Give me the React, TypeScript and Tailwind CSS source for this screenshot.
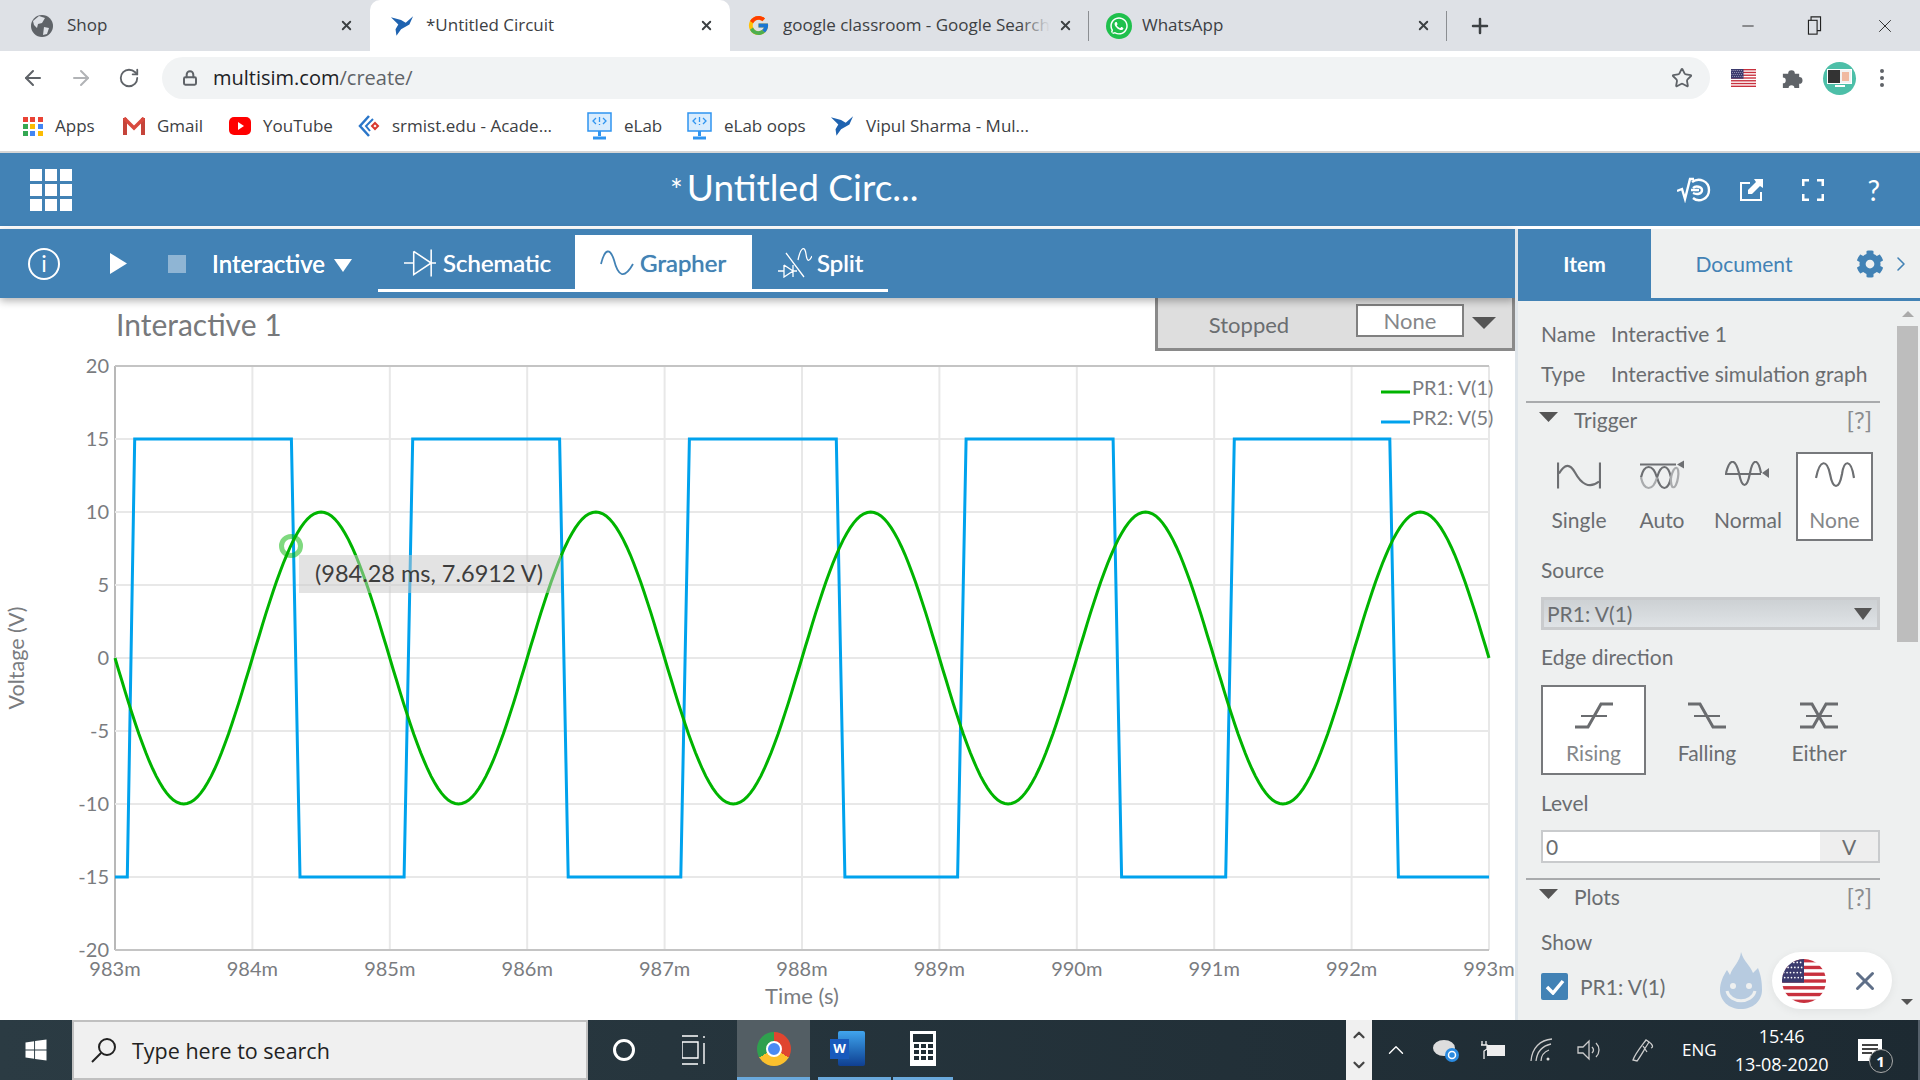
import { ArrowLeft, ArrowRight, ChevronDown, ChevronRight, ChevronUp, Lock, Minus, Plus, RotateCw, Star, X } from "lucide-react";
import { FaCog, FaWhatsapp, FaWindows } from "react-icons/fa";
import { FcGoogle } from "react-icons/fc";

const chromeFont = "font-['Open_Sans',sans-serif]";
const appFont = "font-['Lato',sans-serif]";

function Bird({ className = "w-[24px] h-[22px]" }: { className?: string }) {
  return (
    <svg viewBox="0 0 26 23" className={className}>
      <path d="M1 2 L12 5 L17 8 L25 1 L21 10 L12 15 L7 22 L6 15 L9 10 Z" fill="#1f63b0" />
    </svg>
  );
}

function Flag({ className }: { className: string }) {
  const stripes = [0, 1, 2, 3, 4, 5, 6];
  const stars = [1, 3, 5, 7, 9, 11];
  return (
    <svg viewBox="0 0 26 26" className={className} preserveAspectRatio="none">
      <rect width="26" height="26" fill="#fff" />
      {stripes.map((s) => (
        <rect key={s} y={s * 4} width="26" height="2" fill="#c8313e" />
      ))}
      <rect width="13" height="14" fill="#3c3b6e" />
      {stars.map((x) =>
        [2, 5, 8, 11].map((y) => <circle key={`${x}-${y}`} cx={x + (y % 2 ? 0.6 : 0)} cy={y} r="0.5" fill="#fff" />),
      )}
    </svg>
  );
}

function Tab({ width, icon, label, active, sep, fade, inset = "pl-[17px]" }: { width: string; icon: React.ReactNode; label: string; active?: boolean; sep?: boolean; fade?: boolean; inset?: string }) {
  return (
    <div className={`${width} ${inset} relative flex h-[51px] items-center pr-[16px] ${active ? "rounded-t-[10px] bg-white" : ""}`}>
      <div className="flex w-[36px] shrink-0 items-center">{icon}</div>
      <span className="relative mb-[2px] min-w-0 flex-1 overflow-hidden whitespace-nowrap text-[17px] text-[#3c4043]">
        {label}
        {fade && <span className="absolute right-0 top-0 h-full w-[30px] bg-gradient-to-r from-transparent to-[#dee1e6]" />}
      </span>
      <X size={15} strokeWidth={3} className="ml-2 shrink-0 text-[#3c4043]" />
      {sep && <div className="absolute right-0 top-[11px] h-[30px] w-px bg-[#8b8e92]" />}
    </div>
  );
}

const bookmarks = [
  { id: "apps", label: "Apps", width: "w-[100px]" },
  { id: "gmail", label: "Gmail", width: "w-[106px]" },
  { id: "yt", label: "YouTube", width: "w-[129px]" },
  { id: "srm", label: "srmist.edu - Acade...", width: "w-[229px]" },
  { id: "elab", label: "eLab", width: "w-[100px]" },
  { id: "elab", label: "eLab oops", width: "w-[143px]" },
  { id: "bird", label: "Vipul Sharma - Mul...", width: "w-[210px]" },
];

function BookmarkIcon({ id }: { id: string }) {
  if (id === "apps") {
    const colors = ["#ea4335", "#ea4335", "#ea4335", "#34a853", "#fbbc04", "#4285f4", "#34a853", "#4285f4", "#fbbc04"];
    return (
      <div className="grid w-[20px] grid-cols-3 gap-[2px]">
        {colors.map((c, i) => (
          <div key={i} className="h-[5px] w-[5px]" style={{ background: c }} />
        ))}
      </div>
    );
  }
  if (id === "gmail") {
    return (
      <svg viewBox="0 0 22 18" className="h-[18px] w-[22px]">
        <path d="M0 1 H4 V18 H0 Z M18 1 H22 V18 H18 Z" fill="#c5443a" />
        <path d="M1 1 L11 11 L21 1" fill="none" stroke="#d8493e" strokeWidth="3.5" />
      </svg>
    );
  }
  if (id === "yt") {
    return (
      <svg viewBox="0 0 22 20" className="h-[20px] w-[22px]">
        <rect y="1" width="22" height="18" rx="5" fill="#f00" />
        <path d="M9 6 L15 10 L9 14 Z" fill="#fff" />
      </svg>
    );
  }
  if (id === "srm") {
    return (
      <svg viewBox="0 0 22 24" className="h-[24px] w-[22px]" fill="none">
        <path d="M11 2 L2 12 L11 22" stroke="#2a76c9" strokeWidth="2.5" />
        <path d="M15 5 L8 12 L12 17" stroke="#2a76c9" strokeWidth="2" />
        <path d="M17 9 L20 12 L17 15 L14 12 Z" stroke="#d8392f" strokeWidth="2" />
      </svg>
    );
  }
  if (id === "elab") {
    return (
      <svg viewBox="0 0 25 28" className="h-[28px] w-[25px]" fill="none" stroke="#2f94f0">
        <rect x="1" y="1" width="23" height="18" strokeWidth="1.5" fill="#d9ecfd" />
        <path d="M9 6 L6 9 L9 12 M16 6 L19 9 L16 12 M12.5 5 V10 M12.5 12 V13" strokeWidth="1.3" />
        <path d="M12.5 19 V24 M6 26 H19" strokeWidth="3" />
      </svg>
    );
  }
  return <Bird className="h-[24px] w-[24px]" />;
}

function BrowserChrome() {
  return (
    <div className={`${chromeFont} shrink-0`}>
      <div className="flex h-[51px] items-center bg-[#dee1e6]">
        <Tab
          width="w-[370px]"
          inset="pl-[31px]"
          label="Shop"
          icon={
            <svg viewBox="0 0 22 22" className="h-[22px] w-[22px] shrink-0">
              <circle cx="11" cy="11" r="11" fill="#5f6368" />
              <path d="M8 1 L14 3 L11 8 L7 9 L6 13 L3 10 L2 6 Z M13 12 L18 13 L16 19 L12 20 Z" fill="#dee1e6" />
            </svg>
          }
        />
        <Tab width="w-[360px]" inset="pl-[20px]" label="*Untitled Circuit" active icon={<Bird />} />
        <Tab width="w-[359px]" label="google classroom - Google Search" fade sep icon={<FcGoogle size={23} />} />
        <Tab width="w-[358px]" label="WhatsApp" sep icon={<FaWhatsapp size={26} className="rounded-full bg-[#1fc04c] p-[3px] text-white" />} />
        <Plus size={24} strokeWidth={2.5} className="ml-[21px] text-[#3c4043]" />
        <div className="ml-auto flex items-center pr-[24px]">
          <Minus size={18} strokeWidth={1.2} className="mr-[50px] text-[#222]" />
          <svg viewBox="0 0 16 22" className="mr-[52px] h-[19px] w-[15px]" fill="none" stroke="#222" strokeWidth="1.3">
            <rect x="1" y="5" width="10" height="16" />
            <path d="M4 5 V1 H15 V17 H11" />
          </svg>
          <X size={22} strokeWidth={1} className="text-[#222]" />
        </div>
      </div>
      <div className="flex h-[50px] items-center bg-white pt-[4px]">
        <ArrowLeft size={24} strokeWidth={2} className="ml-[21px] text-[#5f6368]" />
        <ArrowRight size={24} strokeWidth={2} className="ml-[24px] text-[#b1b3b6]" />
        <RotateCw size={22} strokeWidth={2} className="ml-[25px] text-[#5f6368]" />
        <div className="ml-[22px] flex h-[42px] w-[1548px] items-center rounded-full bg-[#f1f3f4] pl-[20px] pr-[17px]">
          <Lock size={16} strokeWidth={3} className="text-[#5f6368]" />
          <span className="ml-[15px] text-[20px] text-[#202124]">
            multisim.com<span className="text-[#5f6368]">/create/</span>
          </span>
          <Star size={22} strokeWidth={2} className="ml-auto text-[#5f6368]" />
        </div>
        <Flag className="ml-[21px] h-[18px] w-[25px]" />
        <svg viewBox="0 0 24 24" className="ml-[24px] h-[23px] w-[23px]">
          <path d="M3 7 H8.5 A3.4 3.4 0 1 1 15.5 7 H20 V10.5 A3.4 3.4 0 1 1 20 17.5 V22 H15 A3 3 0 0 0 9 22 H3 V17 A3 3 0 0 0 3 11 Z" fill="#5f6368" />
        </svg>
        <div className="relative ml-[20px] flex h-[33px] w-[33px] flex-col items-center justify-center rounded-full bg-[#4dbfa8]">
          <div className="flex h-[15px] w-[25px] border border-white">
            <div className="w-1/2 bg-[#333]" />
            <div className="w-1/2 bg-[#f2f2f2] p-[2px]">
              <div className="h-full w-full bg-[#f0b9a0]" />
            </div>
          </div>
          <div className="mt-[1px] h-[2px] w-[10px] bg-white" />
        </div>
        <div className="ml-[24px] flex flex-col gap-[3px]">
          <div className="h-[4px] w-[4px] rounded-full bg-[#5f6368]" />
          <div className="h-[4px] w-[4px] rounded-full bg-[#5f6368]" />
          <div className="h-[4px] w-[4px] rounded-full bg-[#5f6368]" />
        </div>
      </div>
      <div className="flex h-[52px] items-center border-b-2 border-[#d6d6d6] bg-white pl-[23px]">
        {bookmarks.map((b) => (
          <div key={b.label} className={`${b.width} flex shrink-0 items-center gap-[12px]`}>
            <BookmarkIcon id={b.id} />
            <span className="whitespace-nowrap text-[17px] text-[#3c4043]">{b.label}</span>
          </div>
        ))}
      </div>
    </div>
  );
}

function AppHeader() {
  const cells = [0, 1, 2, 3, 4, 5, 6, 7, 8];
  return (
    <div className={`${appFont} flex h-[73px] shrink-0 items-center bg-[#4282b5] pl-[30px] text-white`}>
      <div className="grid w-[42px] grid-cols-3 gap-[3px]">
        {cells.map((c) => (
          <div key={c} className="h-[12px] bg-white" />
        ))}
      </div>
      <div className="mb-[7px] ml-[598px] flex items-baseline">
        <span className="mr-[4px] text-[30px] leading-none">*</span>
        <span className="text-[37px] leading-none">Untitled Circ...</span>
      </div>
      <div className="ml-auto flex items-center pr-[40px]">
        <svg viewBox="0 0 34 26" className="h-[26px] w-[34px]" fill="none" stroke="#fff" strokeWidth="2.4">
          <path d="M0 14 L5 12 L8 22 L13 2 L17 2" />
          <path d="M15 5 C22 0 32 4 32 13 C32 22 22 26 16 21 M16 11 C19 8 25 10 25 13 C25 17 20 18 16 16 M14 13 H22" />
        </svg>
        <svg viewBox="0 0 24 22" className="ml-[29px] h-[22px] w-[24px]" fill="#fff">
          <path d="M0 3 H10 V5 H2 V20 H20 V13 H22 V22 H0 Z" />
          <path d="M14 0 H23 V9 L20 7 L12 15 H8 V11 L16 3 Z" />
        </svg>
        <svg viewBox="0 0 22 22" className="ml-[38px] h-[22px] w-[22px]" fill="none" stroke="#fff" strokeWidth="3">
          <path d="M1 7 V1 H7 M15 1 H21 V7 M21 15 V21 H15 M7 21 H1 V15" />
        </svg>
        <span className="ml-[43px] text-[28px] leading-none">?</span>
      </div>
    </div>
  );
}

function SimToolbar() {
  return (
    <div className="relative flex h-[69px] shrink-0 items-center bg-[#4282b5] pl-[28px] text-white shadow-[0_3px_8px_rgba(0,0,0,0.3)]">
      <div className="flex h-[32px] w-[32px] items-center justify-center rounded-full border-2 border-white text-[23px] leading-none">i</div>
      <svg viewBox="0 0 17 21" className="ml-[50px] h-[21px] w-[17px]">
        <path d="M0 0 L17 10.5 L0 21 Z" fill="#fff" />
      </svg>
      <div className="ml-[41px] h-[18px] w-[18px] bg-[#8fb5d4]" />
      <span className="ml-[26px] text-[24px] font-medium [text-shadow:0_0_0.6px_#fff]">Interactive</span>
      <svg viewBox="0 0 18 13" className="ml-[9px] mt-[4px] h-[13px] w-[18px]">
        <path d="M0 0 H18 L9 13 Z" fill="#fff" />
      </svg>
      <div className="ml-[26px] mt-[6px] flex h-[57px] self-start border-b-[3px] border-white text-[24px] [text-shadow:0_0_0.7px_currentColor]">
        <div className="flex w-[197px] items-center pl-[26px] pt-[2px]">
          <svg viewBox="0 0 34 30" className="mr-[6px] h-[30px] w-[33px]" fill="none" stroke="#fff" strokeWidth="1.6">
            <path d="M0 15 H10 M10 3 V27 L28 15 L10 3 M28 1 V29 M28 15 H33" />
          </svg>
          Schematic
        </div>
        <div className="flex w-[177px] items-center bg-white pl-[25px] pt-[2px] text-[#4282b5]">
          <svg viewBox="0 0 34 26" className="mr-[6px] h-[26px] w-[34px]" fill="none" stroke="#4282b5" strokeWidth="1.8">
            <path d="M1 14 C5 -2 10 -2 14 10 C18 26 24 30 33 14" />
          </svg>
          Grapher
        </div>
        <div className="flex w-[136px] items-center pl-[26px] pt-[2px]">
          <svg viewBox="0 0 34 30" className="mr-[5px] h-[30px] w-[34px]" fill="none" stroke="#fff" strokeWidth="1.3">
            <path d="M0 23 H6 M6 17 V29 L15 23 L6 17 M15 17 V29 M15 23 H19 M8 5 L26 29 M20 12 C23 -2 27 -2 28 6 C29 14 31 14 34 8" />
          </svg>
          Split
        </div>
      </div>
    </div>
  );
}

const xOf = (t: number) => 115 + (t - 983) * 137.4;
const yOf = (v: number) => 366 + (20 - v) * 14.6;

const sinePath = Array.from({ length: 401 }, (_, i) => {
  const t = 983 + i * 0.025;
  const v = -10 * Math.sin(Math.PI * (t - 983));
  return `${i === 0 ? "M" : "L"}${xOf(t).toFixed(1)} ${yOf(v).toFixed(1)}`;
}).join(" ");

// edges read off the picture: [bottom x, top x] pairs in shrunk coordinates
const blueEdges = [
  [104, 110, 238, 245],
  [330, 337, 457, 464],
  [556, 563, 683, 690],
  [782, 789, 909, 916],
  [1001, 1008, 1135, 1142],
];
const scale = 1920 / 1568;
const squarePath =
  `M115 ${yOf(-15)} ` +
  blueEdges
    .map(
      ([a, b, c, d]) =>
        `L${(a * scale).toFixed(1)} ${yOf(-15)} L${(b * scale).toFixed(1)} ${yOf(15)} L${(c * scale).toFixed(1)} ${yOf(15)} L${(d * scale).toFixed(1)} ${yOf(-15)}`,
    )
    .join(" ") +
  ` L1489 ${yOf(-15)}`;

const xTicks = [983, 984, 985, 986, 987, 988, 989, 990, 991, 992, 993];
const yTicks = [20, 15, 10, 5, 0, -5, -10, -15, -20];

function Chart() {
  return (
    <div className="relative h-[669px] w-full">
      <svg viewBox="0 351 1515 669" className="h-[669px] w-[1515px]" fill="none">
        {xTicks.map((t) => (
          <line key={t} x1={xOf(t)} x2={xOf(t)} y1={366} y2={950} stroke={t === 983 ? "#b8b8b8" : "#e8e8e8"} strokeWidth="2" />
        ))}
        {yTicks.map((v) => (
          <line key={v} x1={115} x2={1489} y1={yOf(v)} y2={yOf(v)} stroke={v === 20 || v === -20 ? "#c4c4c4" : "#e8e8e8"} strokeWidth="2" />
        ))}
        <path d={squarePath} stroke="#00a2ed" strokeWidth="3" />
        <path d={sinePath} stroke="#00b400" strokeWidth="3" />
        <circle cx="291" cy="546" r="9.5" stroke="#00b400" strokeOpacity="0.5" strokeWidth="5" />
        <g fontFamily="Lato, sans-serif" fontSize="20" fill="#7a7c7f" stroke="none">
          {yTicks.map((v) => (
            <text key={v} x="109" y={yOf(v) + 7} textAnchor="end">
              {v}
            </text>
          ))}
          {xTicks.map((t) => (
            <text key={t} x={xOf(t)} y="976" textAnchor="middle">
              {t}m
            </text>
          ))}
          <text x="802" y="1004" textAnchor="middle" fontSize="22">
            Time (s)
          </text>
          <text transform="translate(24 658) rotate(-90)" textAnchor="middle" fontSize="21.5">
            Voltage (V)
          </text>
          <text x="1412" y="395">PR1: V(1)</text>
          <text x="1412" y="425">PR2: V(5)</text>
        </g>
        <line x1="1381" x2="1410" y1="392" y2="392" stroke="#00b400" strokeWidth="3" />
        <line x1="1381" x2="1410" y1="422" y2="422" stroke="#00a2ed" strokeWidth="3" />
      </svg>
      <div className="absolute left-[299px] top-[204px] flex h-[38px] w-[262px] items-center bg-[rgba(200,200,200,0.5)] pl-[16px] text-[23.5px] whitespace-nowrap text-[#3d3d3d]">
        (984.28 ms, 7.6912 V)
      </div>
    </div>
  );
}

function TriggerIcon({ kind }: { kind: string }) {
  const common = { fill: "none", stroke: "#6d6f72", strokeWidth: 2.2 };
  if (kind === "single") {
    return (
      <svg viewBox="0 0 44 28" className="mb-[4px] h-[31px] w-[44px]" {...common}>
        <path d="M1 1 V27 M43 1 V27 M2 12 C8 2 13 2 18 11 C24 22 32 28 42 20" />
      </svg>
    );
  }
  if (kind === "auto") {
    return (
      <svg viewBox="0 0 46 32" className="mb-[4px] h-[33px] w-[46px]" {...common}>
        <path d="M1 5 H37" strokeWidth="2.2" />
        <path d="M38 5 L45 1 V9 Z" fill="#6d6f72" stroke="none" />
        <path d="M2 18 C5 4 14 4 18 18 C22 32 29 32 32 18 C29 4 22 4 18 18" strokeWidth="2.2" />
        <path d="M2 18 C5 32 14 32 18 18 M32 18 C35 4 41 6 39 18 C37 32 31 30 32 18" stroke="#a9abad" />
      </svg>
    );
  }
  if (kind === "normal") {
    return (
      <svg viewBox="0 0 46 26" className="mb-[6px] h-[26px] w-[46px]" {...common}>
        <path d="M1 12 C5 -3 10 -3 14 12 C17 28 22 28 25 12 C28 -3 33 -3 36 12 M1 12 V13 H36" />
        <path d="M37 12 L44 7 V17 Z" fill="#6d6f72" stroke="none" />
      </svg>
    );
  }
  return (
    <svg viewBox="0 0 40 26" className="mb-[4px] h-[26px] w-[40px]" {...common}>
      <path d="M1 16 C5 -4 12 -2 15 12 C18 28 24 28 27 12 C29 -2 36 -4 39 16" strokeWidth="2.2" />
    </svg>
  );
}

function EdgeIcon({ kind }: { kind: string }) {
  const rising = "M0 25 H13 L26 2 H38";
  const falling = "M0 2 H12 L25 25 H38";
  return (
    <svg viewBox="0 0 38 27" className="h-[27px] w-[38px]" fill="none" stroke="#6a6c6f" strokeWidth="3">
      {kind !== "falling" && <path d={rising} />}
      {kind !== "rising" && <path d={falling} />}
      <path d="M6 14 H32" strokeWidth="2" />
    </svg>
  );
}

function SectionHeader({ label }: { label: string }) {
  return (
    <div className="flex h-[36px] items-center pb-[2px] text-[#6a6d70]">
      <svg viewBox="0 0 19 10" className="mb-[6px] h-[10px] w-[19px] -ml-[2px]">
        <path d="M0 0 H19 L9.5 10 Z" fill="#555" />
      </svg>
      <span className="ml-[16px] text-[21px]">{label}</span>
      <span className="ml-auto mr-[8px] text-[24px] text-[#8a8c8f]">[?]</span>
    </div>
  );
}

function SidePanel() {
  return (
    <div className="relative flex h-full w-[405px] shrink-0 flex-col border-l-[3px] border-[#dfe5ea] bg-[#eef0f0] text-[#6a6d70]">
      <div className="flex h-[72px] shrink-0 items-center border-b-[3px] border-[#4282b5] text-[21px]">
        <div className="flex h-full w-[133px] items-center justify-center bg-[#4282b5] font-bold text-white">Item</div>
        <div className="w-[186px] text-center text-[#4282b5]">Document</div>
        <FaCog size={28} className="ml-[19px] text-[#4282b5]" />
        <ChevronRight size={24} strokeWidth={1.6} className="ml-[5px] text-[#4282b5]" />
      </div>
      <div className="flex min-h-0 flex-1">
        <div className="w-[379px] shrink-0 overflow-hidden pl-[23px] pr-[17px] pt-[13px] text-[21px]">
          <div className="flex h-[40px] items-center">
            <span className="w-[70px]">Name</span>
            <span>Interactive 1</span>
          </div>
          <div className="flex h-[40px] items-center">
            <span className="w-[70px]">Type</span>
            <span className="whitespace-nowrap">Interactive simulation graph</span>
          </div>
          <div className="-ml-[15px] mt-[7px] h-[2px] bg-[#a9abad]" />
          <SectionHeader label="Trigger" />
          <div className="mt-[13px] flex h-[89px] items-stretch">
            {[
              { kind: "single", label: "Single", width: "w-[76px]" },
              { kind: "auto", label: "Auto", width: "w-[90px]" },
              { kind: "normal", label: "Normal", width: "w-[82px]" },
            ].map((b) => (
              <div key={b.kind} className={`${b.width} flex flex-col items-center justify-between pb-[6px] pt-[6px]`}>
                <div className="flex h-[38px] items-center">
                  <TriggerIcon kind={b.kind} />
                </div>
                <span>{b.label}</span>
              </div>
            ))}
            <div className="ml-[7px] flex w-[77px] flex-col items-center justify-between border-2 border-[#77797c] bg-white pb-[4px] pt-[4px]">
              <div className="flex h-[38px] items-center">
                <TriggerIcon kind="none" />
              </div>
              <span className="text-[#85878a]">None</span>
            </div>
          </div>
          <div className="mt-[14px] flex h-[30px] items-center">Source</div>
          <div className="mt-[12px] flex h-[33px] items-center border-[3px] border-[#c9cbcd] bg-gradient-to-b from-[#cdd1d4] to-[#dfe3e6] pl-[3px] pr-[5px] pt-[1px]">
            <span>PR1: V(1)</span>
            <svg viewBox="0 0 18 12" className="ml-auto h-[12px] w-[18px]">
              <path d="M0 0 H18 L9 12 Z" fill="#555" />
            </svg>
          </div>
          <div className="mt-[12px] flex h-[30px] items-center">Edge direction</div>
          <div className="mt-[13px] flex h-[90px]">
            <div className="flex w-[105px] flex-col items-center border-2 border-[#77797c] bg-white pt-[15px]">
              <EdgeIcon kind="rising" />
              <span className="mt-[8px] text-[#85878a]">Rising</span>
            </div>
            <div className="flex w-[122px] flex-col items-center pt-[17px]">
              <EdgeIcon kind="falling" />
              <span className="mt-[8px]">Falling</span>
            </div>
            <div className="flex w-[102px] flex-col items-center pt-[17px]">
              <EdgeIcon kind="either" />
              <span className="mt-[8px]">Either</span>
            </div>
          </div>
          <div className="mt-[13px] flex h-[30px] items-center">Level</div>
          <div className="mt-[12px] flex h-[33px] items-stretch border-[2px] border-[#c9cbcd] bg-white">
            <span className="flex-1 pl-[3px] leading-[29px]">0</span>
            <span className="w-[58px] bg-[#eeeeee] text-center leading-[29px]">V</span>
          </div>
          <div className="-ml-[15px] mt-[15px] h-[2px] bg-[#a9abad]" />
          <SectionHeader label="Plots" />
          <div className="mt-[11px] flex h-[30px] items-center">Show</div>
          <div className="mt-[14px] flex items-center">
            <div className="flex h-[27px] w-[27px] items-center justify-center rounded-[2px] bg-[#4282b5]">
              <svg viewBox="0 0 20 16" className="h-[16px] w-[20px]" fill="none" stroke="#fff" strokeWidth="3.5">
                <path d="M2 8 L8 14 L18 2" />
              </svg>
            </div>
            <span className="ml-[12px]">PR1: V(1)</span>
          </div>
        </div>
        <div className="relative w-[21px] shrink-0">
          <div className="mx-auto mt-[10px] h-0 w-0 border-x-[6px] border-b-[6px] border-x-transparent border-b-[#aaa]" />
          <div className="mt-[9px] h-[316px] bg-[#bdbdbd]" />
          <div className="absolute bottom-[15px] left-[4px] h-0 w-0 border-x-[6px] border-t-[6px] border-x-transparent border-t-[#555]" />
        </div>
      </div>
      <div className="absolute left-[202px] top-[723px] flex items-center">
        <svg viewBox="0 0 42 57" className="h-[57px] w-[42px]">
          <path d="M21 0 C24 10 30 13 33 21 L38 16 C42 26 42 34 42 38 C42 49 33 57 21 57 C9 57 0 49 0 38 C0 31 3 24 7 18 L10 23 C13 14 20 10 21 0 Z" fill="#b7cbe0" />
          <circle cx="13" cy="34" r="3" fill="#eef0f0" />
          <circle cx="29" cy="34" r="3" fill="#eef0f0" />
          <path d="M7 39 C10 52 32 52 35 39" fill="none" stroke="#eef0f0" strokeWidth="3" />
        </svg>
        <div className="ml-[10px] flex h-[57px] w-[120px] items-center rounded-full bg-white pl-[10px] shadow-[0_2px_10px_rgba(0,0,0,0.06)]">
          <Flag className="h-[44px] w-[44px] rounded-full" />
          <X size={30} strokeWidth={2.4} className="ml-[24px] text-[#5f6f88]" />
        </div>
      </div>
    </div>
  );
}

function Taskbar() {
  return (
    <div className={`${chromeFont} flex h-[60px] shrink-0 items-stretch bg-gradient-to-r from-[#2b3b43] to-[#1d2a32] text-white`}>
      <div className="flex w-[72px] items-center justify-center">
        <FaWindows size={24} />
      </div>
      <div className="flex w-[516px] items-center border-[2px] border-[#c0c0c0] bg-[#f0f0f0] pl-[17px] text-[#222]">
        <svg viewBox="0 0 26 26" className="h-[26px] w-[26px]" fill="none" stroke="#222" strokeWidth="2">
          <circle cx="16" cy="10" r="8" />
          <path d="M10 16 L1 25" />
        </svg>
        <span className="ml-[15px] pt-[2px] text-[21.5px]">Type here to search</span>
      </div>
      <div className="flex w-[149px] items-center pl-[25px]">
        <div className="h-[22px] w-[22px] rounded-full border-[3px] border-white" />
        <svg viewBox="0 0 24 30" className="ml-[47px] h-[30px] w-[24px]" fill="none" stroke="#fff" strokeWidth="1.4">
          <path d="M0 1 H16 M0 7 H16 V23 H0 V7 M0 29 H16 M22 1 V3 M22 8 V29" />
        </svg>
      </div>
      <div className="flex w-[73px] items-center justify-center border-b-[3px] border-[#6aa9dc] bg-[#535e64]">
        <div className="relative h-[34px] w-[34px] overflow-hidden rounded-full bg-[conic-gradient(#e0452f_0deg_120deg,#fbc02d_120deg_240deg,#2fa04e_240deg_360deg)]">
          <div className="absolute left-[9px] top-[9px] h-[16px] w-[16px] rounded-full border-[2px] border-white bg-[#4a8af4]" />
        </div>
      </div>
      <div className="ml-[8px] flex w-[73px] items-center border-b-[3px] border-[#6aa9dc] pl-[12px]">
        <div className="relative h-[35px] w-[35px]">
          <div className="ml-[8px] h-[35px] w-[27px] rounded-[2px] bg-gradient-to-b from-[#41a5ee] to-[#103f91]" />
          <div className="absolute left-0 top-[8px] flex h-[20px] w-[19px] items-center justify-center bg-[#185abd] text-[13px] font-bold">W</div>
        </div>
      </div>
      <div className="ml-[2px] flex w-[60px] items-center justify-center border-b-[3px] border-[#6aa9dc]">
        <div className="flex h-[35px] w-[26px] flex-col items-center gap-[2px] bg-white pt-[3px]">
          <div className="h-[8px] w-[20px] bg-[#1f2c33]" />
          {[0, 1, 2].map((r) => (
            <div key={r} className="flex gap-[2px]">
              <div className="h-[4px] w-[5px] bg-[#1f2c33]" />
              <div className="h-[4px] w-[5px] bg-[#1f2c33]" />
              <div className="h-[4px] w-[5px] bg-[#1f2c33]" />
            </div>
          ))}
        </div>
      </div>
      <div className="ml-[393px] flex w-[26px] flex-col items-center justify-between bg-[#f0f0f0] py-[6px] text-[#444]">
        <ChevronUp size={18} strokeWidth={3} />
        <ChevronDown size={18} strokeWidth={3} />
      </div>
      <div className="flex flex-1 items-center border-r-2 border-[#55606a]">
        <ChevronUp size={26} strokeWidth={1.3} className="ml-[11px]" />
        <svg viewBox="0 0 26 26" className="ml-[24px] h-[26px] w-[26px]">
          <ellipse cx="11" cy="11" rx="11" ry="8" fill="#ddd" />
          <circle cx="19" cy="18" r="7" fill="#2a8ae0" />
          <circle cx="19" cy="18" r="3.5" fill="none" stroke="#fff" strokeWidth="1.5" />
        </svg>
        <svg viewBox="0 0 26 20" className="ml-[22px] h-[20px] w-[26px]">
          <rect x="6" y="5" width="18" height="11" fill="#eee" />
          <path d="M1 1 V5 M5 1 V5 M0 5 H6 V9 L3 11 V19" fill="none" stroke="#eee" strokeWidth="1.3" />
        </svg>
        <svg viewBox="0 0 24 24" className="ml-[23px] h-[24px] w-[24px]" fill="none" stroke="#ccc" strokeWidth="1.3">
          <path d="M1 23 C2 10 10 2 22 1 M6 23 C7 14 12 8 21 6 M11 23 C11 18 14 14 19 12" />
          <circle cx="18" cy="21" r="1.5" fill="#ddd" stroke="none" />
        </svg>
        <svg viewBox="0 0 24 22" className="ml-[23px] h-[22px] w-[24px]" fill="none" stroke="#ccc" strokeWidth="1.3">
          <path d="M1 8 H6 L12 2 V20 L6 14 H1 Z M15 8 C17 10 17 12 15 14 M19 4 C23 8 23 14 19 18" />
        </svg>
        <svg viewBox="0 0 22 24" className="ml-[31px] h-[24px] w-[22px]" fill="none" stroke="#ccc" strokeWidth="1.3">
          <path d="M1 22 C3 16 8 10 14 2 L17 4 C13 10 9 18 5 23 Z M11 8 L15 14 M17 4 C20 6 22 9 19 10" />
        </svg>
        <span className="ml-[28px] text-[17px]">ENG</span>
        <div className="ml-[15px] flex w-[100px] flex-col items-center text-[18px] leading-[28px]">
          <span>15:46</span>
          <span className="whitespace-nowrap">13-08-2020</span>
        </div>
        <div className="relative ml-[26px] h-[22px] w-[24px] bg-white">
          <div className="absolute left-[4px] top-[5px] h-[2px] w-[16px] bg-[#444]" />
          <div className="absolute left-[4px] top-[9px] h-[2px] w-[16px] bg-[#444]" />
          <div className="absolute left-[4px] top-[13px] h-[2px] w-[10px] bg-[#444]" />
          <div className="absolute left-[11px] top-[10px] flex h-[24px] w-[24px] items-center justify-center rounded-full border border-[#aaa] bg-[#1f2c33] text-[15px] font-bold">1</div>
        </div>
      </div>
    </div>
  );
}

export default function App() {
  return (
    <div className="flex h-[1080px] w-[1920px] flex-col overflow-hidden bg-white">
      <BrowserChrome />
      <AppHeader />
      <div className={`${appFont} flex min-h-0 flex-1 border-t-[3px] border-white`}>
        <div className="flex w-[1515px] shrink-0 flex-col">
          <SimToolbar />
          <div className="flex h-[53px] shrink-0 items-start justify-between">
            <span className="ml-[116px] mt-[4px] text-[30px] text-[#77797c]">Interactive 1</span>
            <div className="flex h-[53px] w-[360px] items-center border-[3px] border-t-0 border-[#8a8a8a] bg-[#dedede] text-[22px] text-[#6a6d70]">
              <span className="w-[182px] pt-[2px] text-center">Stopped</span>
              <div className="ml-[16px] -mt-[5px] flex h-[33px] w-[108px] items-center justify-center border-[2px] border-[#808080] bg-white text-[#85878a]">None</div>
              <svg viewBox="0 0 24 12" className="ml-[8px] h-[12px] w-[24px]">
                <path d="M0 0 H24 L12 12 Z" fill="#555" />
              </svg>
            </div>
          </div>
          <Chart />
        </div>
        <SidePanel />
      </div>
      <Taskbar />
    </div>
  );
}
